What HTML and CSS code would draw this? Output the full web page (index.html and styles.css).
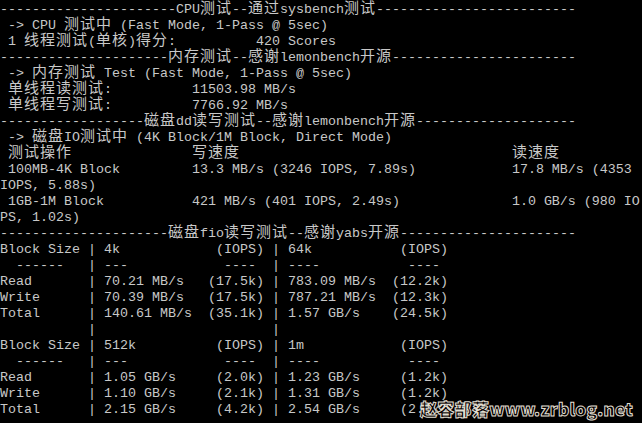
FILE: index.html
```html
<!DOCTYPE html>
<html lang="zh">
<head>
<meta charset="utf-8">
<title>Terminal</title>
<link rel="stylesheet" href="styles.css">
</head>
<body>
<div class="screen">
<pre class="term">----------------------CPU<span class="c">测试</span>--<span class="c">通过</span>sysbench<span class="c">测试</span>-------------------------
 -&gt; CPU <span class="c">测试中</span> (Fast Mode, 1-Pass @ 5sec)
 1 <span class="c">线程测试</span>(<span class="c">单核</span>)<span class="c">得分</span>:          420 Scores
---------------------<span class="c">内存测试</span>--<span class="c">感谢</span>lemonbench<span class="c">开源</span>-----------------------
 -&gt; <span class="c">内存测试</span> Test (Fast Mode, 1-Pass @ 5sec)
 <span class="c">单线程读测试</span>:          11503.98 MB/s
 <span class="c">单线程写测试</span>:          7766.92 MB/s
------------------<span class="c">磁盘</span>dd<span class="c">读写测试</span>--<span class="c">感谢</span>lemonbench<span class="c">开源</span>--------------------
 -&gt; <span class="c">磁盘</span>IO<span class="c">测试中</span> (4K Block/1M Block, Direct Mode)
 <span class="c">测试操作</span>               <span class="c">写速度</span>                                  <span class="c">读速度</span>
 100MB-4K Block         13.3 MB/s (3246 IOPS, 7.89s)            17.8 MB/s (4353
IOPS, 5.88s)
 1GB-1M Block           421 MB/s (401 IOPS, 2.49s)              1.0 GB/s (980 IO
PS, 1.02s)
---------------------<span class="c">磁盘</span>fio<span class="c">读写测试</span>--<span class="c">感谢</span>yabs<span class="c">开源</span>----------------------
Block Size | 4k            (IOPS) | 64k           (IOPS)
  ------   | ---            ----  | ----           ---- 
Read       | 70.21 MB/s   (17.5k) | 783.09 MB/s  (12.2k)
Write      | 70.39 MB/s   (17.5k) | 787.21 MB/s  (12.3k)
Total      | 140.61 MB/s  (35.1k) | 1.57 GB/s    (24.5k)
           |                      |
Block Size | 512k          (IOPS) | 1m            (IOPS)
  ------   | ---            ----  | ----           ---- 
Read       | 1.05 GB/s     (2.0k) | 1.23 GB/s     (1.2k)
Write      | 1.10 GB/s     (2.1k) | 1.31 GB/s     (1.2k)
Total      | 2.15 GB/s     (4.2k) | 2.54 GB/s     (2.5k)</pre>
<div class="watermark">赵容部落www.zrblog.net</div>
</div>
</body>
</html>
```
FILE: styles.css
```css
html, body {
  margin: 0;
  padding: 0;
  background: #000;
}
.screen {
  position: relative;
  width: 642px;
  height: 423px;
  overflow: hidden;
  background: #000;
}
.term {
  margin: 0;
  padding: 2px 0 0 0;
  font-family: "Liberation Mono", "DejaVu Sans Mono", monospace;
  font-size: 13.333px;
  line-height: 16px;
  color: #c8c8c8;
  white-space: pre;
}
.c {
  font-family: "Noto Sans CJK SC", sans-serif;
  font-size: 15px;
  letter-spacing: 1px;
  line-height: 0;
}
.watermark {
  position: absolute;
  left: 420px;
  top: 399px;
  font-family: "Noto Sans CJK SC", sans-serif;
  font-weight: 900;
  font-size: 17px;
  line-height: 20px;
  letter-spacing: 0.3px;
  color: #000;
  -webkit-text-stroke: 1px #e0ddd0;
  white-space: nowrap;
}
```
